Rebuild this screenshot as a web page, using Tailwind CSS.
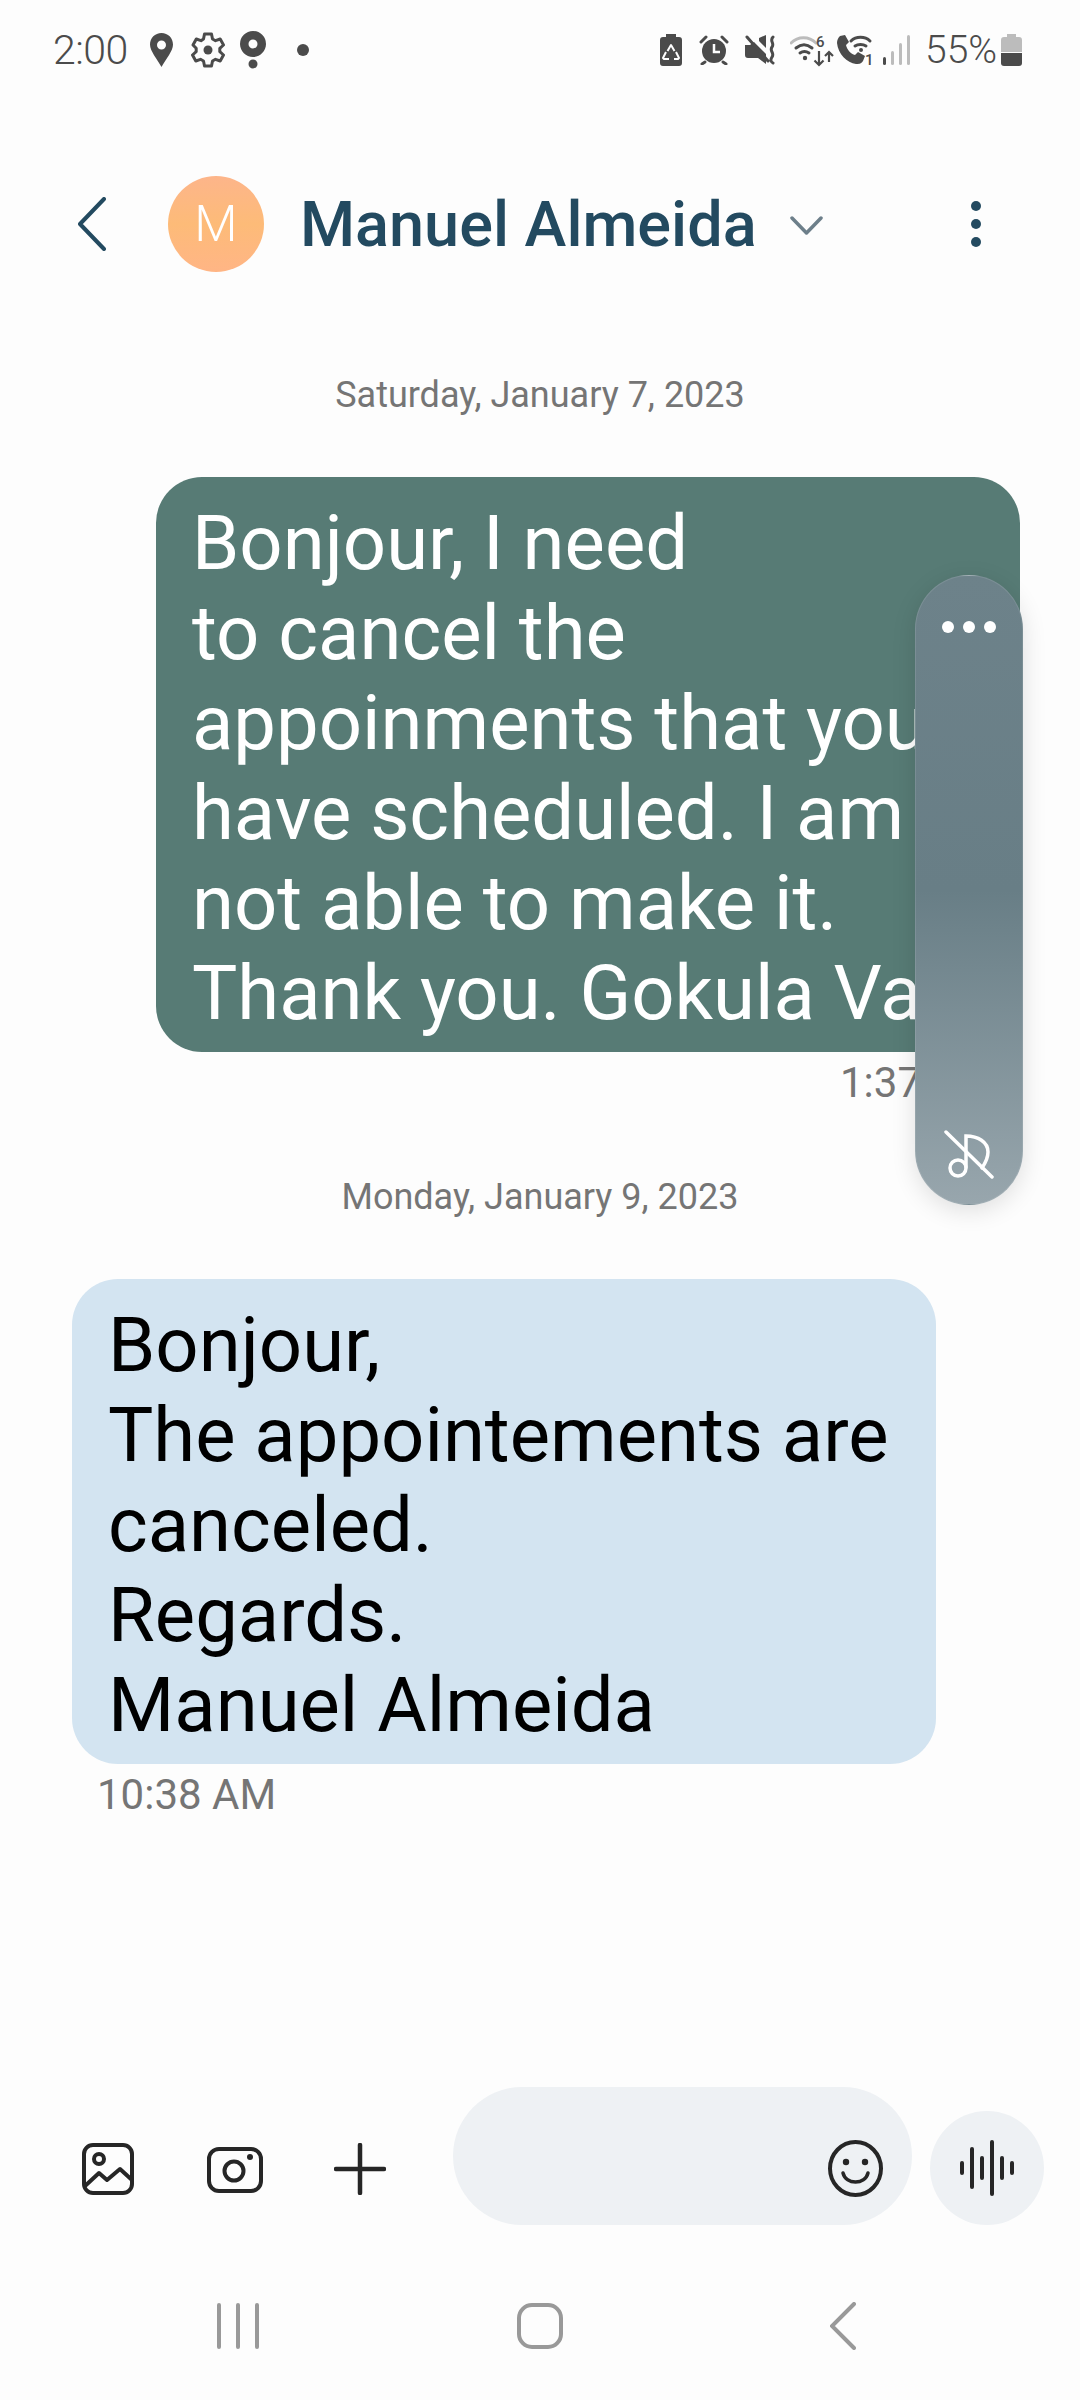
<!DOCTYPE html>
<html>
<head>
<meta charset="utf-8">
<script src="https://cdn.jsdelivr.net/npm/@tailwindcss/browser@4"></script>
</head>
<body class="m-0">
<div class="relative flex flex-col w-[1080px] h-[2400px] overflow-hidden bg-[#fdfdfd] font-['Roboto',sans-serif]">

  <!-- status bar -->
  <div class="flex items-center h-[100px] pl-[53px] text-[#4b4b4b]">
    <span class="text-[41px] leading-none w-[76px] tracking-[-0.5px] font-light whitespace-nowrap">2:00</span>
    <svg class="ml-[21px]" width="23" height="34" viewBox="0 0 23 34"><path fill="#4b4b4b" fill-rule="evenodd" d="M11.5 0C5 0 0 5 0 11.5 0 18 7 26 11.5 34 16 26 23 18 23 11.5 23 5 18 0 11.5 0zm0 7.500a4.500 4.500 0 1 1 0 9 4.500 4.500 0 0 1 0-9z"/></svg>
    <svg class="ml-[18px]" width="34" height="36" viewBox="0 0 34 36" fill="none" stroke="#4b4b4b" stroke-width="3"><path stroke-linejoin="round" d="M13.500 2h7l1 5 3 1.700 4.700-1.700 3.300 6-3.700 3.300v3.400l3.700 3.300-3.300 6-4.700-1.700-3 1.700-1 5h-7l-1-5-3-1.700-4.700 1.700-3.300-6 3.700-3.300v-3.400L2 13l3.300-6L10 8.700 12.500 7z"/><circle cx="17" cy="18" r="4.500" fill="#4b4b4b" stroke="none"/></svg>
    <svg class="ml-[15px]" width="26" height="38" viewBox="0 0 26 38"><path fill="#4b4b4b" fill-rule="evenodd" d="M13 0a13 13 0 0 1 13 13c0 7-6 13-13 13S0 20 0 13A13 13 0 0 1 13 0zm0 8.500a4.500 4.500 0 1 0 0 9 4.500 4.500 0 0 0 0-9z"/><circle cx="13" cy="33" r="4.500" fill="#4b4b4b"/></svg>
    <span class="ml-[31px] w-[12px] h-[12px] rounded-full bg-[#4b4b4b]"></span>

    <svg class="ml-[351px]" width="22" height="32" viewBox="0 0 22 32"><path fill="#4b4b4b" d="M6 0h10v3h3a3 3 0 0 1 3 3v23a3 3 0 0 1-3 3H3a3 3 0 0 1-3-3V6a3 3 0 0 1 3-3h3z"/><path fill="none" stroke="#fdfdfd" stroke-width="2" stroke-linejoin="round" d="M7.500 17l3.500-6 3.500 6M16 18l3 6-1 1h-4M9 25H4l-1-1 3-6"/></svg>
    <svg class="ml-[17px]" width="30" height="30" viewBox="0 0 30 30"><circle cx="15" cy="16" r="12" fill="#4b4b4b"/><path fill="none" stroke="#fdfdfd" stroke-width="2.500" d="M15 9v8h6"/><path stroke="#4b4b4b" stroke-width="3" stroke-linecap="round" fill="none" d="M2 7l5-5M28 7l-5-5M6 27l-3 2M24 27l3 2"/></svg>
    <svg class="ml-[16px]" width="30" height="30" viewBox="0 0 30 30"><path fill="#4b4b4b" d="M0 10h5l4-3 12 12v10l-8-6H3a3 3 0 0 1-3-3zM14 3l7-3v13l-7-7z"/><path stroke="#4b4b4b" stroke-width="3" stroke-linecap="round" fill="none" d="M2 2l21 24M28 2c-4 4 2 6-1 10-3 4 3 6 0 10-2 3-1 5 1 6"/></svg>
    <svg class="ml-[15px]" width="44" height="34" viewBox="0 0 44 34" fill="none"><path stroke="#bcbcbc" stroke-width="3" stroke-linecap="round" d="M1 10c7-7 18-7 25 0"/><path stroke="#4b4b4b" stroke-width="3" stroke-linecap="round" d="M6 15c5-4 11-4 16 0M10 20c3-2 6-2 9 0"/><circle cx="15" cy="25" r="2.200" fill="#4b4b4b"/><text x="26" y="14" font-family="Roboto" font-size="15" font-weight="500" fill="#4b4b4b">6</text><path stroke="#4b4b4b" stroke-width="2.200" d="M29 18v14M24.500 27.500l4.500 4.500 4.500-4.500M39 29V19M35 23l4-4 4 4"/></svg>
    <svg class="ml-[3px]" width="38" height="40" viewBox="0 -4 38 40" fill="none"><path fill="#4b4b4b" d="M3 2l5-1 4 7-3 3c1 5 5 9 9 10l3-3 7 4-2 5c-2 3-4 3-7 3C10 29 1 20 0 9c0-3 1-5 3-7z"/><path stroke="#4b4b4b" stroke-width="3" stroke-linecap="round" d="M14 7c5-5 14-5 19 0M18 12c3-2 8-2 11 0"/><circle cx="24" cy="16" r="2" fill="#4b4b4b"/><text x="28" y="31" font-family="Roboto" font-size="15" font-weight="500" fill="#4b4b4b">1</text></svg>
    <svg class="ml-[8px]" width="27" height="30" viewBox="0 0 27 30"><rect x="0" y="22" width="3" height="8" rx="1.500" fill="#4b4b4b"/><rect x="8" y="16" width="3" height="14" rx="1.500" fill="#bcbcbc"/><rect x="16" y="8" width="3" height="22" rx="1.500" fill="#bcbcbc"/><rect x="24" y="0" width="3" height="30" rx="1.500" fill="#bcbcbc"/></svg>
    <span class="ml-[15px] text-[39px] leading-none w-[70px] font-light whitespace-nowrap">55%</span>
    <svg class="ml-[6px]" width="21" height="32" viewBox="0 0 21 32"><path fill="#bcbcbc" d="M6 0h9v3h3a3 3 0 0 1 3 3v12H0V6a3 3 0 0 1 3-3h3z"/><path fill="#4b4b4b" d="M0 19h21v10a3 3 0 0 1-3 3H3a3 3 0 0 1-3-3z"/></svg>
  </div>

  <!-- header -->
  <div class="flex items-center h-[248px] pl-[78px]">
    <svg width="28" height="54" viewBox="0 0 28 54" fill="none"><path stroke="#234a60" stroke-width="4" stroke-linecap="round" stroke-linejoin="round" d="M26 2L2 27l24 25"/></svg>
    <div class="ml-[62px] w-[96px] h-[96px] rounded-full flex items-center justify-center text-white text-[50px] font-light bg-gradient-to-b from-[#fdb58a] via-[#fdbb78] to-[#ffb585]">M</div>
    <span class="ml-[36px] text-[63px] leading-none font-medium text-[#234a60] whitespace-nowrap">Manuel Almeida</span>
    <svg class="ml-[33px] mt-[2px]" width="33" height="19" viewBox="0 0 33 19" fill="none"><path stroke="#6d7f8a" stroke-width="3.500" stroke-linecap="round" stroke-linejoin="round" d="M2 2l14.500 15L31 2"/></svg>
    <div class="ml-[148px] flex flex-col gap-[8px]">
      <span class="w-[10px] h-[10px] rounded-full bg-[#234a60]"></span>
      <span class="w-[10px] h-[10px] rounded-full bg-[#234a60]"></span>
      <span class="w-[10px] h-[10px] rounded-full bg-[#234a60]"></span>
    </div>
  </div>

  <!-- date 1 -->
  <div class="flex items-center justify-center h-[92px] pt-[2px] text-[36px] text-[#757575]">Saturday, January 7, 2023</div>

  <!-- sent -->
  <div class="mt-[37px] ml-[156px] w-[864px] h-[575px] rounded-[46px] bg-[#577b75] pt-[21px] pl-[36px] text-white text-[76px] leading-[90px] whitespace-nowrap overflow-hidden">Bonjour, I need<br>to cancel the<br>appoinments that you<br>have scheduled. I am<br>not able to make it.<br>Thank you. Gokula Va</div>
  <div class="h-[60px] pl-[840px] flex items-center text-[42px] text-[#757575]">1:37</div>

  <!-- date 2 -->
  <div class="h-[167px] pt-[2px] flex items-center justify-center text-[36px] text-[#757575]">Monday, January 9, 2023</div>

  <!-- received -->
  <div class="ml-[72px] w-[864px] h-[485px] rounded-[46px] bg-[#d3e4f1] pt-[21px] pl-[36px] text-black text-[76px] leading-[90px] whitespace-nowrap">Bonjour,<br>The appointements are<br>canceled.<br>Regards.<br>Manuel Almeida</div>
  <div class="h-[60px] pl-[97px] flex items-center text-[42px] text-[#757575]">10:38 AM</div>

  <div class="flex-1"></div>

  <!-- composer -->
  <div class="flex items-end h-[138px] pl-[82px]">
    <svg class="mb-[30px]" width="52" height="52" viewBox="0 0 52 52" fill="none" stroke="#262626" stroke-width="4" stroke-linejoin="round"><rect x="2" y="2" width="48" height="48" rx="9"/><circle cx="17" cy="16" r="5"/><path stroke-linecap="round" d="M3 43l14-13 8 7 13-11 12 11"/></svg>
    <svg class="ml-[73px] mb-[30px]" width="56" height="52" viewBox="0 0 56 52" fill="none" stroke="#262626" stroke-width="4"><rect x="2" y="6" width="52" height="42" rx="10"/><circle cx="27" cy="28" r="9.500"/><circle cx="43" cy="14" r="3" fill="#262626" stroke="none"/></svg>
    <svg class="ml-[71px] mb-[30px]" width="52" height="52" viewBox="0 0 52 52" fill="none" stroke="#262626" stroke-width="4.500" stroke-linecap="round"><path d="M26 2v48M2 26h48"/></svg>
    <div class="ml-[67px] w-[459px] h-[138px] rounded-[69px] bg-[#eef1f4] flex items-end justify-end pr-[29px] pb-[28px]">
      <svg width="55" height="57" viewBox="0 0 55 57" fill="none" stroke="#262626" stroke-width="4"><ellipse cx="27.500" cy="28.500" rx="25.500" ry="26.500"/><path stroke-linecap="round" stroke-width="3.500" d="M15 33c3 12 22 12 25 0"/><circle cx="18" cy="22" r="3.200" fill="#262626" stroke="none"/><circle cx="37" cy="22" r="3.200" fill="#262626" stroke="none"/></svg>
    </div>
    <div class="ml-[18px] w-[114px] h-[114px] rounded-full bg-[#eef1f4] flex items-center justify-center">
      <svg width="56" height="56" viewBox="0 0 56 56" fill="none" stroke="#262626" stroke-width="4" stroke-linecap="round"><path d="M3 23v10M13 9v38M23 18v20M33 2v52M43 18v20M53 23v10"/></svg>
    </div>
  </div>

  <!-- nav -->
  <div class="flex items-start h-[175px] pt-[78px] pl-[217px]">
    <svg width="42" height="46" viewBox="0 0 42 46" fill="none" stroke="#999" stroke-width="4" stroke-linecap="round"><path d="M2 2v42M21 2v42M40 2v42"/></svg>
    <svg class="ml-[258px]" width="46" height="46" viewBox="0 0 46 46" fill="none" stroke="#999" stroke-width="4"><rect x="2" y="2" width="42" height="42" rx="13"/></svg>
    <svg class="ml-[267px] -mt-[1px]" width="26" height="48" viewBox="0 0 26 48" fill="none" stroke="#999" stroke-width="4" stroke-linecap="round"><path d="M24 2L2 24l22 22"/></svg>
  </div>

  <!-- floating panel -->
  <div class="absolute left-[915px] top-[575px] w-[108px] h-[630px] rounded-[54px] bg-gradient-to-b from-[#6d828a] via-[#687e86] via-50% to-[#98a6ad] border border-white/10 shadow-[0_6px_24px_rgba(0,0,0,0.12)] flex flex-col items-center justify-between pt-[45px] pb-[22px]">
    <div class="flex gap-[9px]">
      <span class="w-[12px] h-[12px] rounded-full bg-white"></span>
      <span class="w-[12px] h-[12px] rounded-full bg-white"></span>
      <span class="w-[12px] h-[12px] rounded-full bg-white"></span>
    </div>
    <svg width="50" height="52" viewBox="0 0 50 52" fill="none" stroke="#fff" stroke-width="3.500" stroke-linecap="round"><path d="M2 2l46 45"/><circle cx="14" cy="38" r="8"/><path d="M22 37V6c12 0 22 6 22 16 0 6-2 10-6 16"/></svg>
  </div>
</div>
</body>
</html>
